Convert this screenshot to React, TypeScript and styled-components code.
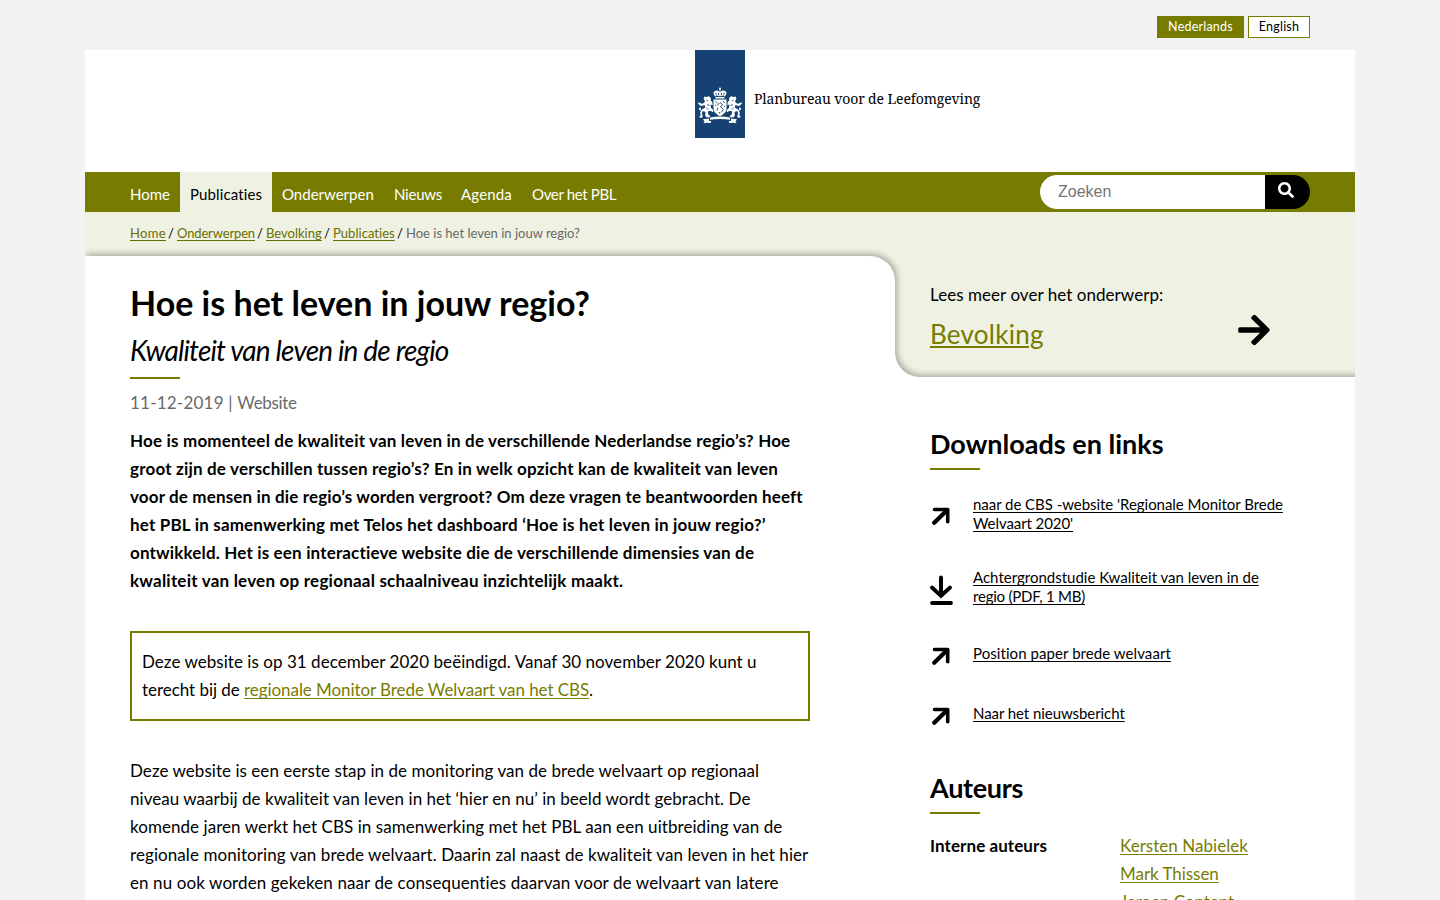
import React from 'react';
import styled, { createGlobalStyle, css } from 'styled-components';
import { FaArrowRight, FaSearch } from 'react-icons/fa';

const olive = '#777c00';
const pale = '#eff1e2';
const edge = 'rgba(0, 0, 0, 0.3)';

const GlobalStyle = createGlobalStyle`
  * { box-sizing: border-box; }
  body {
    margin: 0;
    background: #f2f2f2;
    color: #000;
    font: 17px/28px Lato, "Open Sans", sans-serif;
  }
  h1, h2, p, ul { margin: 0; padding: 0; }
  ul { list-style: none; }
`;

const Viewport = styled.div`
  height: 900px;
  overflow: hidden;
`;

const Container = styled.div`
  width: 1270px;
  margin: 0 auto;
`;

const LanguageBar = styled.div`
  display: flex;
  justify-content: flex-end;
  gap: 4px;
  height: 50px;
  padding: 16px 45px 0;
`;

const Language = styled.a<{ $active?: boolean; $width: number }>`
  width: ${(p) => p.$width}px;
  height: 22px;
  border: 1px solid ${olive};
  background: ${(p) => (p.$active ? olive : '#fff')};
  color: ${(p) => (p.$active ? '#fff' : '#000')};
  font-size: 12.5px;
  line-height: 20px;
  letter-spacing: 0.22px;
  text-align: center;
`;

const Page = styled.div`
  background: #fff;
`;

const Header = styled.header`
  display: flex;
  align-items: flex-start;
  height: 122px;
  padding-left: 610px;
`;

const Ribbon = styled.div`
  width: 50px;
  height: 88px;
  padding: 37px 3px 0;
  background: #154273;
`;

const SiteName = styled.span`
  margin: 35px 0 0 9px;
  font-family: "Noto Serif", serif;
  font-size: 14px;
  letter-spacing: -0.13px;
  white-space: nowrap;
`;

const NavBar = styled.div`
  display: flex;
  justify-content: space-between;
  height: 40px;
  padding: 0 45px 0 35px;
  background: ${olive};
`;

const Nav = styled.nav`
  display: flex;
`;

const NavItem = styled.a<{ $active?: boolean; $width: number; $ls?: number }>`
  width: ${(p) => p.$width}px;
  padding: 4px 0 0 10px;
  background: ${(p) => (p.$active ? pale : 'transparent')};
  color: ${(p) => (p.$active ? '#000' : '#fff')};
  font-size: 15px;
  line-height: 37px;
  letter-spacing: ${(p) => p.$ls ?? 0}px;
  white-space: nowrap;
`;

const Search = styled.form`
  display: flex;
  width: 270px;
  height: 34px;
  margin-top: 3px;
  overflow: hidden;
  border-radius: 17px;
`;

const SearchInput = styled.input`
  width: 225px;
  padding: 0 0 0 18px;
  border: 0;
  background: #fff;
  font: 16px "Liberation Sans", Arial, sans-serif;
  &::placeholder { color: #757575; }
`;

const SearchButton = styled.button`
  display: flex;
  justify-content: center;
  width: 45px;
  padding: 7px 3px 0 0;
  border: 0;
  background: #000;
  color: #fff;
  font-size: 16px;
`;

const Breadcrumb = styled.div`
  display: flex;
  height: 44px;
  padding-left: 45px;
  background: ${pale};
  font-size: 13px;
  line-height: 42px;
`;

const Crumb = styled.a<{ $width: number; $ls?: number }>`
  width: ${(p) => p.$width}px;
  color: #696e00;
  letter-spacing: ${(p) => p.$ls ?? 0}px;
  text-decoration: underline;
  text-underline-offset: 1.5px;
  text-decoration-skip-ink: none;
  white-space: nowrap;
`;

const Slash = styled.span`
  width: 11px;
  padding-right: 1px;
  text-align: center;
`;

const CurrentCrumb = styled.span`
  color: #696969;
`;

const Columns = styled.div`
  display: grid;
  grid-template-columns: 810px 460px;
`;

const MainColumn = styled.main`
  position: relative;
  z-index: 1;
  clip-path: polygon(0 -12px, 822px -12px, 822px 27px, 810px 27px, 810px 100%, 0 100%);
`;

const Article = styled.article`
  min-height: 660px;
  padding: 27px 0 0 45px;
  border-top-right-radius: 25px;
  background: #fff;
  box-shadow: 2px -2px 6px ${edge};
`;

const Backdrop = styled.div`
  background: linear-gradient(${pale} 30px, #fff 30px);
`;

const Title = styled.h1`
  font-size: 34px;
  line-height: 40px;
`;

const Subtitle = styled.p`
  margin-top: 7px;
  font-size: 28px;
  font-style: italic;
  line-height: 40px;
  letter-spacing: -0.82px;
`;

const Rule = styled.div<{ $top: number; $bottom: number }>`
  width: 50px;
  height: 2px;
  margin: ${(p) => p.$top}px 0 ${(p) => p.$bottom}px;
  background: ${olive};
`;

const Meta = styled.p`
  color: #696969;
`;

const PublicationDate = styled.span`
  letter-spacing: 0.22px;
`;

const PublicationType = styled.span`
  letter-spacing: -0.35px;
`;

const Intro = styled.p`
  margin-top: 10px;
  font-weight: bold;
`;

const Notice = styled.p`
  width: 680px;
  margin: 36px 0;
  padding: 15px 10px;
  border: 2px solid ${olive};
`;

const Line = styled.span<{ $ls: number }>`
  display: block;
  letter-spacing: ${(p) => p.$ls}px;
  white-space: nowrap;
`;

const underlined = css`
  text-decoration: underline;
  text-decoration-thickness: 1px;
  text-underline-offset: 2px;
  text-decoration-skip-ink: none;
`;

const TextLink = styled.a<{ $ls?: number }>`
  ${underlined}
  color: ${olive};
  letter-spacing: ${(p) => p.$ls ?? 0}px;
`;

const Topic = styled.section`
  position: relative;
  display: flex;
  justify-content: space-between;
  height: 121px;
  padding: 25px 83px 0 35px;
  border-bottom-left-radius: 25px;
  background: ${pale};

  &::after {
    content: '';
    position: absolute;
    inset: -60px -20px 0 0;
    border-bottom-left-radius: 25px;
    box-shadow: inset 2px -2px 6px ${edge};
    clip-path: polygon(0 87px, 12px 87px, 12px 120px, 460px 120px, 460px 100%, 0 100%);
    pointer-events: none;
  }
`;

const TopicLink = styled.a`
  display: block;
  margin-top: 5px;
  color: ${olive};
  font-size: 26px;
  line-height: 40px;
  letter-spacing: 0.25px;
  text-decoration: underline;
  text-decoration-thickness: 2px;
  text-underline-offset: 2px;
`;

const TopicArrow = styled.span`
  display: flex;
  padding-top: 31px;
  font-size: 36px;
`;

const Side = styled.section<{ $top: number }>`
  padding: ${(p) => p.$top}px 0 0 35px;
`;

const SideTitle = styled.h2<{ $ls?: number }>`
  font-size: 27px;
  line-height: 40px;
  letter-spacing: ${(p) => p.$ls ?? 0}px;
`;

const LinkList = styled.ul`
  display: grid;
  gap: 35px;
`;

const LinkItem = styled.li`
  display: flex;
  align-items: center;
  min-height: 25px;
`;

const LinkIcon = styled.span`
  display: flex;
  width: 43px;
  padding-top: 5px;
`;

const Download = styled.a`
  ${underlined}
  font-size: 15px;
  line-height: 19px;
`;

const Authors = styled.div`
  display: grid;
  grid-template-columns: 190px 1fr;
`;

const AuthorRole = styled.span`
  font-weight: bold;
  letter-spacing: 0.08px;
`;

const Lion = () => (
  <>
    <path d="M5.500 12l1-2.500 2 .6 2.500-.9 2 2-.3 2.300 1.600 1.500.4 3.200-2.200-.8.600 3.500 2.200 2.200v2.200l-3-1.600-2.500.8.500 3 2 1.500-.6 1.300H8l-.8-2.200.3-3L4.800 24l-1 2.500 1 2.700-.8 1.500H2l-.7-1.300 1.400-.7-.5-3.200 1.700-3 3.600-2.200-1-2.300-3 .9-1.700-1 .6-1.200 2.700-.3 1.900-1.600-.5-1.500z" />
    <path d="M.3 16l2.200.2 1 1.500-1.600.4zM2.500 20.500c-2.200 1-1 3 .5 2.700" stroke="#fff" strokeWidth=".8" />
    <path d="M8.500 13l1.500 1M9 17.500l2.500 1M8.500 21l2 1.600" stroke="#154273" strokeWidth=".8" />
  </>
);

const Emblem = () => (
  <svg width="44" height="38" viewBox="0 0 44 38" fill="#fff">
    <circle cx="22" cy="1.6" r="1" />
    <path d="M21.5 2h1v3h-1z" />
    <path d="M16.2 4.6c2-1.6 4-1.2 5.3.6h1c1.300-1.800 3.300-2.200 5.300-.6 1.300 1.400.7 3-.8 4.600H17c-1.500-1.600-2.100-3.200-.8-4.600zM17.500 9.600h9v1.800h-9z" />
    <path d="M17.500 5.800l1.300 2.700M26.500 5.800l-1.300 2.700M20.600 6v2.500M23.400 6v2.500M17.500 9.500h9" stroke="#154273" strokeWidth=".9" />
    <path d="M15.500 12.500h13v8.500c0 4-3 6.500-6.500 8-3.500-1.500-6.500-4-6.500-8z" />
    <path d="M17.500 14.500l2 1.500M25 14l1.500 2M19 18.500l3-3 2.500 2-2 2.500 3 2.500-2.500 3M20 20.500l-1 3M17.500 18v1M26.500 19v1M21.500 25v1.500" stroke="#154273" strokeWidth=".9" fill="none" />
    <Lion />
    <g transform="matrix(-1 0 0 1 44 0)">
      <Lion />
    </g>
    <path d="M12 30.500q10-1.800 20 0v2.300q-10-1.800-20 0zM5 32.300l6-.8v2.400l2.300.3-.4 1.900q-4-1-7.600.2l1.300-1.900zM39 32.300l-6-.8v2.400l-2.300.3.4 1.900q4-1 7.600.2l-1.300-1.900z" />
  </svg>
);

const ExternalIcon = () => (
  <svg width="23" height="19" viewBox="0 0 23 19" fill="none" stroke="#000" strokeLinejoin="round" strokeLinecap="round">
    <path d="M4.500 2.500H17.700V14.800" strokeWidth="3.600" />
    <path d="M4.200 15.800L17 3.200" strokeWidth="4.200" />
  </svg>
);

const DownloadIcon = () => (
  <svg width="23" height="30" viewBox="0 0 23 30" fill="none" stroke="#000" strokeLinecap="round">
    <path d="M11 2.500V19" strokeWidth="4" />
    <path d="M2 12.500L11 21L20 12.500" strokeWidth="3.800" />
    <path d="M2 28H21" strokeWidth="3.800" />
  </svg>
);

export default function App() {
  return (
    <Viewport>
      <GlobalStyle />
      <Container>
        <LanguageBar>
          <Language $active $width={87}>Nederlands</Language>
          <Language $width={62}>English</Language>
        </LanguageBar>
        <Page>
          <Header>
            <Ribbon><Emblem /></Ribbon>
            <SiteName>Planbureau voor de Leefomgeving</SiteName>
          </Header>
          <NavBar>
            <Nav>
              <NavItem $width={60}>Home</NavItem>
              <NavItem $active $width={92} $ls={0.13}>Publicaties</NavItem>
              <NavItem $width={112}>Onderwerpen</NavItem>
              <NavItem $width={67} $ls={-0.24}>Nieuws</NavItem>
              <NavItem $width={71} $ls={0.17}>Agenda</NavItem>
              <NavItem $width={105} $ls={-0.34}>Over het PBL</NavItem>
            </Nav>
            <Search>
              <SearchInput placeholder="Zoeken" />
              <SearchButton type="button" aria-label="Zoeken"><FaSearch /></SearchButton>
            </Search>
          </NavBar>
          <Breadcrumb>
            <Crumb $width={36} $ls={0.34}>Home</Crumb><Slash>/</Slash>
            <Crumb $width={78} $ls={-0.14}>Onderwerpen</Crumb><Slash>/</Slash>
            <Crumb $width={56}>Bevolking</Crumb><Slash>/</Slash>
            <Crumb $width={62} $ls={0.04}>Publicaties</Crumb><Slash>/</Slash>
            <CurrentCrumb>Hoe is het leven in jouw regio?</CurrentCrumb>
          </Breadcrumb>
          <Columns>
            <MainColumn>
              <Backdrop>
                <Article>
                  <Title>Hoe is het leven in jouw regio?</Title>
                  <Subtitle>Kwaliteit van leven in de regio</Subtitle>
                  <Rule $top={7} $bottom={10} />
                  <Meta>
                    <PublicationDate>11-12-2019 | </PublicationDate>
                    <PublicationType>Website</PublicationType>
                  </Meta>
                  <Intro>
                    <Line $ls={0.18}>Hoe is momenteel de kwaliteit van leven in de verschillende Nederlandse regio’s? Hoe</Line>
                    <Line $ls={0.18}>groot zijn de verschillen tussen regio’s? En in welk opzicht kan de kwaliteit van leven</Line>
                    <Line $ls={0.14}>voor de mensen in die regio’s worden vergroot? Om deze vragen te beantwoorden heeft</Line>
                    <Line $ls={0.18}>het PBL in samenwerking met Telos het dashboard ‘Hoe is het leven in jouw regio?’</Line>
                    <Line $ls={0.16}>ontwikkeld. Het is een interactieve website die de verschillende dimensies van de</Line>
                    <Line $ls={0.22}>kwaliteit van leven op regionaal schaalniveau inzichtelijk maakt.</Line>
                  </Intro>
                  <Notice>
                    <Line $ls={0.04}>Deze website is op 31 december 2020 beëindigd. Vanaf 30 november 2020 kunt u</Line>
                    <Line $ls={-0.04}>
                      terecht bij de <TextLink $ls={-0.07}>regionale Monitor Brede Welvaart van het CBS</TextLink>.
                    </Line>
                  </Notice>
                  <p>
                    <Line $ls={0.045}>Deze website is een eerste stap in de monitoring van de brede welvaart op regionaal</Line>
                    <Line $ls={0.045}>niveau waarbij de kwaliteit van leven in het ‘hier en nu’ in beeld wordt gebracht. De</Line>
                    <Line $ls={0.055}>komende jaren werkt het CBS in samenwerking met het PBL aan een uitbreiding van de</Line>
                    <Line $ls={0.075}>regionale monitoring van brede welvaart. Daarin zal naast de kwaliteit van leven in het hier</Line>
                    <Line $ls={0.1}>en nu ook worden gekeken naar de consequenties daarvan voor de welvaart van latere</Line>
                  </p>
                </Article>
              </Backdrop>
            </MainColumn>
            <aside>
              <Topic>
                <div>
                  <Line $ls={0.05}>Lees meer over het onderwerp:</Line>
                  <TopicLink>Bevolking</TopicLink>
                </div>
                <TopicArrow><FaArrowRight /></TopicArrow>
              </Topic>
              <Side $top={47}>
                <SideTitle>Downloads en links</SideTitle>
                <Rule $top={4} $bottom={25} />
                <LinkList>
                  <LinkItem>
                    <LinkIcon><ExternalIcon /></LinkIcon>
                    <Download>
                      <Line $ls={-0.04}>naar de CBS -website 'Regionale Monitor Brede</Line>
                      <Line $ls={-0.08}>Welvaart 2020'</Line>
                    </Download>
                  </LinkItem>
                  <LinkItem>
                    <LinkIcon><DownloadIcon /></LinkIcon>
                    <Download>
                      <Line $ls={0}>Achtergrondstudie Kwaliteit van leven in de</Line>
                      <Line $ls={-0.22}>regio (PDF, 1 MB)</Line>
                    </Download>
                  </LinkItem>
                  <LinkItem>
                    <LinkIcon><ExternalIcon /></LinkIcon>
                    <Download><Line $ls={0.07}>Position paper brede welvaart</Line></Download>
                  </LinkItem>
                  <LinkItem>
                    <LinkIcon><ExternalIcon /></LinkIcon>
                    <Download><Line $ls={-0.07}>Naar het nieuwsbericht</Line></Download>
                  </LinkItem>
                </LinkList>
              </Side>
              <Side $top={42}>
                <SideTitle $ls={-0.3}>Auteurs</SideTitle>
                <Rule $top={4} $bottom={18} />
                <Authors>
                  <AuthorRole>Interne auteurs</AuthorRole>
                  <ul>
                    <li><TextLink $ls={0.04}>Kersten Nabielek</TextLink></li>
                    <li><TextLink $ls={-0.04}>Mark Thissen</TextLink></li>
                    <li><TextLink $ls={-0.06}>Jeroen Content</TextLink></li>
                  </ul>
                </Authors>
              </Side>
            </aside>
          </Columns>
        </Page>
      </Container>
    </Viewport>
  );
}
